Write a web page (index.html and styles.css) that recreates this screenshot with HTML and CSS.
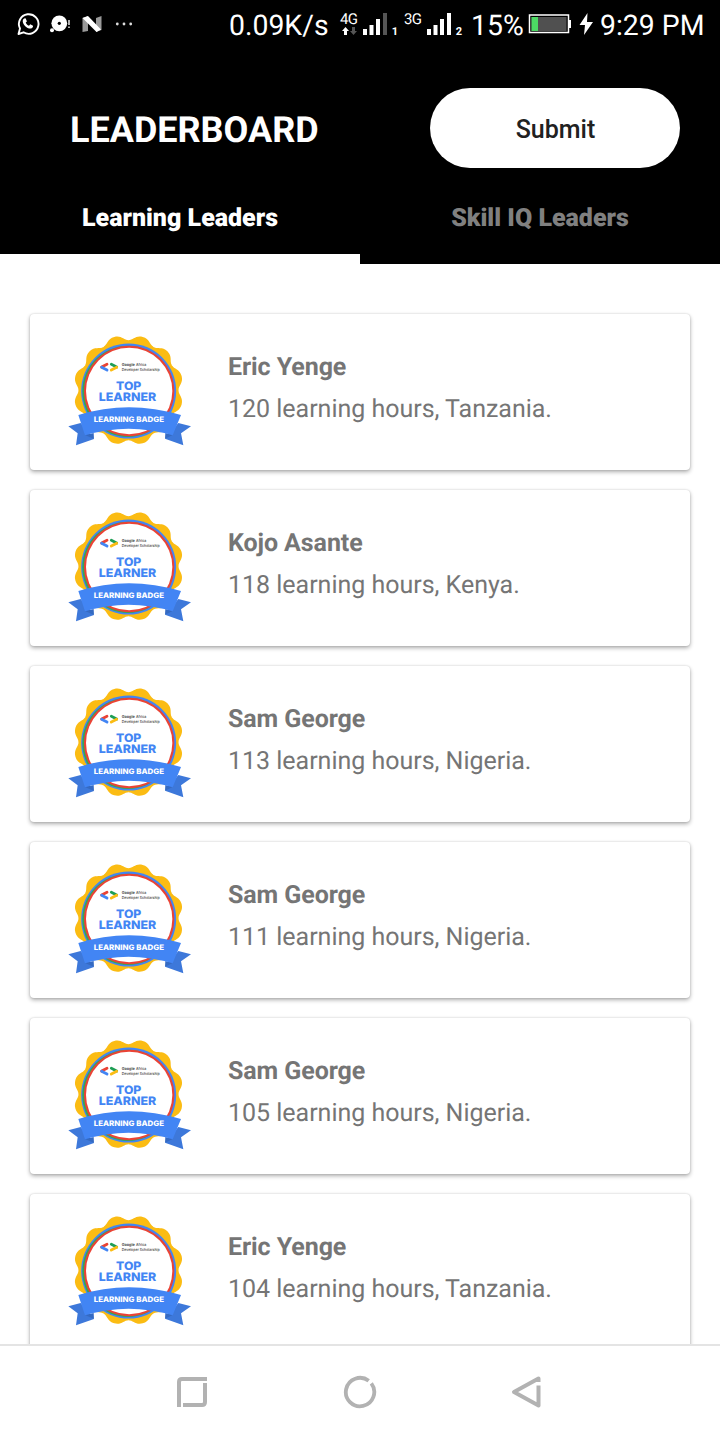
FILE: index.html
```
<!DOCTYPE html>
<html lang="en">
<head>
<meta charset="utf-8">
<title>Leaderboard</title>
<link rel="stylesheet" href="styles.css">
</head>
<body>
<svg class="defs" width="0" height="0" aria-hidden="true">
  <defs>
    <path id="petal" d="M0 0L-38.800 -144.800C-25 -148.600 -22 -165 0 -165S25 -148.600 38.800 -144.800Z"/>
    <symbol id="badge" viewBox="0 0 420 390">
      <g fill="#fbbc13" transform="translate(205.500 195.500)">
        <circle r="149"/>
        <use href="#petal" transform="rotate(15)"/><use href="#petal" transform="rotate(45)"/>
        <use href="#petal" transform="rotate(75)"/><use href="#petal" transform="rotate(105)"/>
        <use href="#petal" transform="rotate(135)"/><use href="#petal" transform="rotate(165)"/>
        <use href="#petal" transform="rotate(195)"/><use href="#petal" transform="rotate(225)"/>
        <use href="#petal" transform="rotate(255)"/><use href="#petal" transform="rotate(285)"/>
        <use href="#petal" transform="rotate(315)"/><use href="#petal" transform="rotate(345)"/>
      </g>
      <circle cx="206" cy="198" r="142.500" fill="#4285f4"/>
      <circle cx="204" cy="199" r="137" fill="#34a853"/>
      <circle cx="207.500" cy="198" r="135.500" fill="#ea4335"/>
      <circle cx="207.500" cy="198" r="129.500" fill="#fff"/>
      <g fill="none" stroke-width="8.500" stroke-linecap="round">
        <path d="M141 118L125 126" stroke="#ea4335"/><path d="M125 127L141 135" stroke="#4285f4"/>
        <path d="M154 118L170 126" stroke="#1e9e55"/><path d="M170 127L154 135" stroke="#fbbc13"/>
      </g>
      <g class="badge-text">
        <text class="tiny strong" x="185" y="123" textLength="39" lengthAdjust="spacingAndGlyphs">Google</text>
        <text class="tiny" x="228" y="123" textLength="31" lengthAdjust="spacingAndGlyphs">Africa</text>
        <text class="tiny" x="185" y="137" textLength="114" lengthAdjust="spacingAndGlyphs">Developer Scholarship</text>
        <text class="big" x="168" y="194" textLength="76" lengthAdjust="spacingAndGlyphs">TOP</text>
        <text class="big" x="116" y="227" textLength="173" lengthAdjust="spacingAndGlyphs">LEARNER</text>
      </g>
      <path d="M25 304L62 294L102 342L48 361L53 325ZM393 304L355 294L315 341L370 361L363 325Z" fill="#3d78da"/>
      <path d="M75 330L101 324L102 342ZM338 330L316 324L315 341Z" fill="#356ac2"/>
      <path d="M55 270Q205 223 363 270L338 331Q205 291 75 331Z" fill="#4285f4"/>
      <g class="badge-text"><text class="ribbon" x="101" y="290.500" textLength="211" lengthAdjust="spacingAndGlyphs">LEARNING BADGE</text></g>
    </symbol>
  </defs>
</svg>
<div class="screen">
  <div class="status">
    <svg class="notif" width="140" height="50" viewBox="0 0 140 50">
      <path d="M18.500 34L20 28.500A9.800 9.800 0 1 1 23.500 32.300Z" fill="none" stroke="#fff" stroke-width="1.900" stroke-linejoin="round"/>
      <path d="M24.800 18.200C22.800 18.700 22.300 21 23.100 23C24.500 26.300 28 28.900 30.800 28.600C32.200 28.400 33.300 27 33 25.800L30.300 24.300L29 25.800C27.500 25.300 26.200 24 25.700 22.600L26.900 21.400L25.800 18.600Z" fill="#fff"/>
      <circle cx="59.300" cy="23.300" r="7.900" fill="#fff"/><circle cx="59.300" cy="23.300" r="1.600"/>
      <circle cx="52" cy="30.300" r="2" fill="#fff"/>
      <path d="M69 20V25M69 26.500V28" stroke="#ddd" stroke-width="1.600"/>
      <path d="M82.500 18L88 16V31L82.500 32ZM96 18L101.500 16V30L96 32Z" fill="#999"/>
      <path d="M82.500 18L88 16L101 29.500L96.500 32Z" fill="#fff"/>
      <circle cx="117.300" cy="24" r="1.400" fill="#ddd"/><circle cx="124" cy="24" r="1.400" fill="#ddd"/><circle cx="130.700" cy="24" r="1.400" fill="#ddd"/>
    </svg>
    <span class="speed">0.09K/s</span>
    <svg class="network" width="130" height="50" viewBox="338 0 130 50">
      <g class="net-text">
        <text x="340" y="24" textLength="18">4G</text><text x="404" y="24" textLength="18">3G</text>
        <text class="sim" x="391.800" y="35">1</text><text class="sim" x="455.700" y="35">2</text>
      </g>
      <path d="M345.500 27L349 31H347V35H344V31H342Z" fill="#fff"/><path d="M353.500 35L350 31H352V27H355V31H357Z" fill="#555"/>
      <path d="M363 29h4v6h-4zM369.500 25h4v10h-4zM376 19h4v16h-4zM427 29h4v6h-4zM433.500 25h4v10h-4zM440 19h4v16h-4zM447 13h4v22h-4z" fill="#fff"/>
      <path d="M383 13h4v22h-4z" fill="#555"/>
    </svg>
    <span class="percent">15%</span>
    <svg class="power" width="70" height="50" viewBox="527 0 70 50">
      <rect x="529.500" y="15" width="39" height="17.500" fill="#000" stroke="#fff" stroke-width="1.500"/>
      <rect x="531.500" y="17" width="35" height="14" fill="#505050"/><rect x="531.500" y="17" width="6.500" height="14" fill="#4cd964"/>
      <path d="M568 20h3v8h-3z" fill="#fff"/>
      <path d="M587.500 13L579.500 25H585L584 35L593 22H587Z" fill="#fff"/>
    </svg>
    <span class="time">9:29 PM</span>
  </div>
  <header class="appbar">
    <h1 class="title">LEADERBOARD</h1>
    <button class="submit">Submit</button>
  </header>
  <nav class="tabs">
    <div class="tab active">Learning Leaders</div>
    <div class="tab">Skill IQ Leaders</div>
  </nav>
  <main class="list">
    <article class="card"><svg class="badge"><use href="#badge"/></svg><div class="info"><h2>Eric Yenge</h2><p>120 learning hours, Tanzania.</p></div></article>
    <article class="card"><svg class="badge"><use href="#badge"/></svg><div class="info"><h2>Kojo Asante</h2><p>118 learning hours, Kenya.</p></div></article>
    <article class="card"><svg class="badge"><use href="#badge"/></svg><div class="info"><h2>Sam George</h2><p>113 learning hours, Nigeria.</p></div></article>
    <article class="card"><svg class="badge"><use href="#badge"/></svg><div class="info"><h2>Sam George</h2><p>111 learning hours, Nigeria.</p></div></article>
    <article class="card"><svg class="badge"><use href="#badge"/></svg><div class="info"><h2>Sam George</h2><p>105 learning hours, Nigeria.</p></div></article>
    <article class="card"><svg class="badge"><use href="#badge"/></svg><div class="info"><h2>Eric Yenge</h2><p>104 learning hours, Tanzania.</p></div></article>
  </main>
  <footer class="navbar">
    <svg width="32" height="34" viewBox="176 1375 32 34"><path d="M207 1379H182Q179 1379 179 1382V1407M205 1383V1402Q205 1405 202 1405H183" fill="none" stroke="#b2b2b2" stroke-width="4"/></svg>
    <svg width="34" height="34" viewBox="343 1375 34 34"><path d="M368.700 1380.800A14.200 14.200 0 1 0 371.300 1383.400" fill="none" stroke="#b2b2b2" stroke-width="3.800"/></svg>
    <svg width="32" height="34" viewBox="511 1375 32 34"><path d="M538.500 1382V1378.500L514 1392L538.500 1405.500V1385.500" fill="none" stroke="#b2b2b2" stroke-width="4" stroke-linejoin="round"/></svg>
  </footer>
</div>
</body>
</html>
```
FILE: styles.css
```
* { box-sizing: border-box; }
body { margin: 0; background: #fff; font-family: Roboto, sans-serif; text-rendering: geometricPrecision; }
svg { display: block; flex: none; }
.defs { position: absolute; }
.screen { display: flex; flex-direction: column; width: 720px; height: 1440px; overflow: hidden; }
.status { display: flex; height: 50px; flex: none; background: #000; color: #fff; font-size: 28.400px; line-height: 51px; white-space: nowrap; }
.speed { width: 109px; margin-left: 89px; }
.percent { width: 56px; margin-left: 3px; }
.power { margin-right: 3px; }
.net-text { font-family: Roboto, sans-serif; font-size: 15px; fill: #fff; }
.net-text .sim { font-size: 11px; font-weight: 700; }
.appbar { display: flex; flex: none; justify-content: space-between; align-items: center; height: 134px; padding: 22px 40px 0 70px; background: #000; color: #fff; }
.title { margin: 4px 0 0; font-size: 36px; line-height: 42px; font-weight: 700; }
.submit { width: 250px; height: 80px; padding: 2px 0 0 1px; border: 0; border-radius: 40px; background: #fff; color: #212121; font: 500 25px Roboto, sans-serif; }
.tabs { display: flex; flex: none; height: 80px; background: #000; }
.tab { flex: 1; height: 80px; padding-top: 20px; text-align: center; color: #808080; font-size: 25px; line-height: 30px; font-weight: 900; border-bottom: 10px solid #000; }
.tab.active { color: #fff; border-bottom-color: #fff; }
.list { display: flex; flex: 1; min-height: 0; flex-direction: column; gap: 20px; padding: 50px 30px 0; overflow: hidden; }
.card { display: flex; flex: none; height: 156px; padding: 11px 0 0 30px; border-radius: 4px; background: #fff; box-shadow: 0 2px 4px rgba(0, 0, 0, .32), 0 0 2px rgba(0, 0, 0, .16); }
.badge { width: 140px; height: 130px; }
.badge-text { font-family: Inter, sans-serif; fill: #4285f4; font-weight: 800; }
.badge-text .tiny { font-size: 12px; font-weight: 500; fill: #444; }
.badge-text .strong { font-weight: 700; }
.badge-text .big { font-size: 35px; }
.badge-text .ribbon { font-size: 22.500px; }
.badge-text .ribbon { fill: #fff; }
.info { padding: 27px 0 0 28px; color: #757575; }
.info h2, .info p { margin: 0; font-size: 25px; line-height: 32px; }
.info h2 { font-weight: 700; letter-spacing: -.08px; }
.info p { margin-top: 10px; letter-spacing: -.02px; }
.navbar { display: flex; flex: none; height: 96px; padding: 29px 177px 0 176px; justify-content: space-between; border-top: 2px solid #e4e4e4; background: #fff; }
```
